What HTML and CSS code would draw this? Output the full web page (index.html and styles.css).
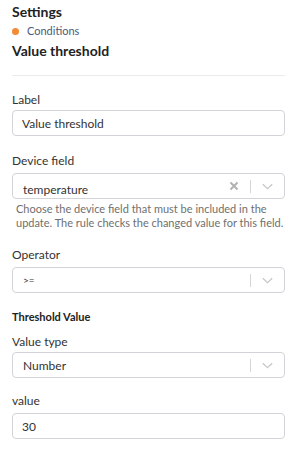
FILE: index.html
```html
<!DOCTYPE html>
<html>
	<head>
		<meta charset="utf-8" />
		<meta name="viewport" content="width=device-width, initial-scale=1" />
		<title>Settings</title>
		<link rel="stylesheet" href="styles.css">
	</head>
	<body>
		<div class="panel">
			<div class="panel-head">
				<h1 class="title">Settings</h1>
				<div class="crumb"><span class="dot"></span>Conditions</div>
				<h2 class="title subtitle">Value threshold</h2>
			</div>

			<form class="form">
				<div class="field">
					<label class="field-label" for="label">Label</label>
					<input class="text-input" type="text" id="label" value="Value threshold" />
				</div>

				<div class="field">
					<label class="field-label">Device field</label>
					<div class="select">
						<div class="select-value select-value--low">temperature</div>
						<div class="select-icons">
							<svg class="clear" width="10" height="10" viewBox="0 0 10 10">
								<path d="M1.5 1.5 L8.5 8.5 M8.5 1.5 L1.5 8.5" />
							</svg>
							<span class="sep"></span>
							<svg class="chevron" width="11" height="7" viewBox="0 0 11 7">
								<path d="M0.8 1.2 L5.5 5.6 L10.2 1.2" />
							</svg>
						</div>
					</div>
					<p class="help">Choose the device field that must be included in the update. The rule checks the changed value for this field.</p>
				</div>

				<div class="field">
					<label class="field-label">Operator</label>
					<div class="select">
						<div class="select-value select-value--small">&gt;=</div>
						<div class="select-icons">
							<span class="sep"></span>
							<svg class="chevron" width="11" height="7" viewBox="0 0 11 7">
								<path d="M0.8 1.2 L5.5 5.6 L10.2 1.2" />
							</svg>
						</div>
					</div>
				</div>

				<h3 class="section-title">Threshold Value</h3>

				<div class="group">
					<div class="field">
						<label class="field-label">Value type</label>
						<div class="select">
							<div class="select-value">Number</div>
							<div class="select-icons">
								<span class="sep"></span>
								<svg class="chevron" width="11" height="7" viewBox="0 0 11 7">
									<path d="M0.8 1.2 L5.5 5.6 L10.2 1.2" />
								</svg>
							</div>
						</div>
					</div>

					<div class="field">
						<label class="field-label" for="value">value</label>
						<input class="text-input" type="text" id="value" value="30" />
					</div>
				</div>
			</form>
		</div>
	</body>
</html>
```

FILE: styles.css
```css
body {
    margin: 0;
    background: #fff;
    font-family: Lato, "Liberation Sans", sans-serif;
    color: #333;
}

.panel {
    width: 273px;
    padding: 3px 0 0 12px;
}

.title {
    margin: 0;
    font-size: 14px;
    line-height: 17px;
    font-weight: 700;
    color: #222;
}

.subtitle {
    margin-top: 3px;
}

.crumb {
    margin-top: 3px;
    display: flex;
    align-items: center;
    font-size: 11px;
    line-height: 16px;
    color: #4b5a78;
}

.dot {
    width: 7px;
    height: 7px;
    border-radius: 50%;
    background-color: #f38a36;
    margin: 0 8px 0 0;
}

.panel-head {
    padding-bottom: 16px;
    border-bottom: 1px solid #ebebeb;
}

.form {
    padding-top: 16px;
}

.field {
    margin-bottom: 17px;
}

.field-label {
    display: block;
    font-size: 12px;
    line-height: 16px;
    margin-bottom: 4px;
    color: #333;
}

.field:first-child .field-label {
    margin-bottom: 2px;
}

.text-input {
    display: block;
    box-sizing: border-box;
    width: 100%;
    height: 26px;
    margin: 0;
    padding: 0 9px;
    border: 1px solid #d3d3d9;
    border-radius: 4px;
    font-family: inherit;
    font-size: 12px;
    color: #333;
    outline: none;
}

.select {
    box-sizing: border-box;
    height: 26px;
    display: flex;
    align-items: center;
    border: 1px solid #d3d3d9;
    border-radius: 4px;
    padding: 0 11px 0 10px;
}

.select-value {
    flex: 1;
    font-size: 12px;
    line-height: 15px;
    color: #333;
}

/* chosen value sits a bit lower in the box */
.select-value--low {
    padding-top: 6px;
}

.select-value--small {
    font-size: 10px;
}

.select-icons {
    display: flex;
    align-items: center;
}

.clear {
    margin-right: 11px;
}

.clear path {
    stroke: #b3b3b3;
    stroke-width: 2;
    fill: none;
}

.sep {
    width: 1px;
    height: 13px;
    background-color: #d6d6d6;
    margin-right: 11px;
}

.chevron path {
    stroke: #c8c8c8;
    stroke-width: 1.3;
    fill: none;
}

.help {
    margin: 3px 0 0 4px;
    font-size: 11px;
    line-height: 14px;
    color: #6f6f6f;
}

.section-title {
    margin: 3px 0 10px;
    font-size: 11px;
    line-height: 14px;
    font-weight: 700;
    color: #222;
}

.group {
    display: flex;
    flex-direction: column;
    gap: 15px;
}

.group .field {
    margin-bottom: 0;
}
```
